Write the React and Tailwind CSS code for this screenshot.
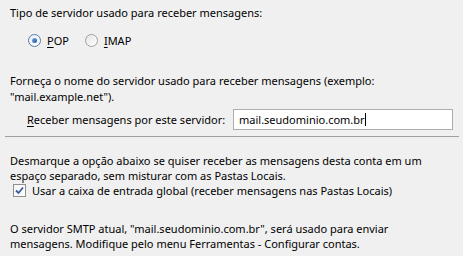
export default function App() {
  return (
    <div
      className="w-[463px] h-[256px] overflow-hidden bg-[#f0f0f0] text-[11px] leading-[15px] text-black whitespace-nowrap"
      style={{ fontFamily: '"Segoe UI", "Noto Sans", "Open Sans", sans-serif' }}
    >
      {/* Server type */}
      <div className="px-[10px] pt-[5px]">
        <div>Tipo de servidor usado para receber mensagens:</div>
        <div className="flex items-center mt-[13px] pl-[18px] h-[15px]">
          <label className="flex items-center gap-[6px]">
            <span className="w-[13px] h-[13px] rounded-full border border-[#5a7aa6] bg-gradient-to-br from-[#e8eef6] to-[#ffffff] flex items-center justify-center">
              <span className="w-[5px] h-[5px] rounded-full bg-gradient-to-br from-[#7fb1e6] to-[#1c4f96]" />
            </span>
            <span>
              <span className="underline underline-offset-2">P</span>OP
            </span>
          </label>
          <label className="flex items-center gap-[6px] ml-[16px]">
            <span className="w-[13px] h-[13px] rounded-full border border-[#a0a0a0] bg-gradient-to-br from-[#e4e4e4] to-[#ffffff]" />
            <span>
              <span className="underline underline-offset-2">I</span>MAP
            </span>
          </label>
        </div>
      </div>

      {/* Server name */}
      <div className="px-[10px] mt-[25px]">
        <div className="leading-[16px]">
          Forneça o nome do servidor usado para receber mensagens (exemplo:
          <br />
          "mail.example.net").
        </div>
        <div className="flex items-center mt-[4px] pl-[17px]">
          <span className="w-[206px] shrink-0">
            <span className="underline underline-offset-2">R</span>eceber mensagens por este servidor:
          </span>
          <div className="w-[221px] h-[21px] bg-white border border-[#abadb3] flex items-center pl-[5px]">
            <span>mail.seudominio.com.br</span>
            <span className="w-px h-[13px] bg-black" />
          </div>
        </div>
      </div>

      <div className="mx-[5px] mt-[6px] w-[454px] h-px bg-[#a0a0a0]" />

      {/* Local folders */}
      <div className="px-[10px] mt-[16px]">
        <div>
          Desmarque a opção abaixo se quiser receber as mensagens desta conta em um
          <br />
          espaço separado, sem misturar com as Pastas Locais.
        </div>
        <label className="flex items-center gap-[6px] mt-0 pl-[3px] h-[15px]">
          <span className="w-[13px] h-[13px] border border-[#8f8f8f] bg-gradient-to-br from-[#f4f4f4] to-[#ffffff] flex items-center justify-center">
            <svg width="9" height="9" viewBox="0 0 9 9">
              <path d="M1 4.5 L3.5 7 L8 1.5" fill="none" stroke="#3b5a9a" strokeWidth="1.8" />
            </svg>
          </span>
          <span>Usar a caixa de entrada global (receber mensagens nas Pastas Locais)</span>
        </label>
      </div>

      {/* SMTP note */}
      <div className="px-[10px] mt-[23px]">
        O servidor SMTP atual, "mail.seudominio.com.br", será usado para enviar
        <br />
        mensagens. Modifique pelo menu Ferramentas - Configurar contas.
      </div>
    </div>
  );
}
